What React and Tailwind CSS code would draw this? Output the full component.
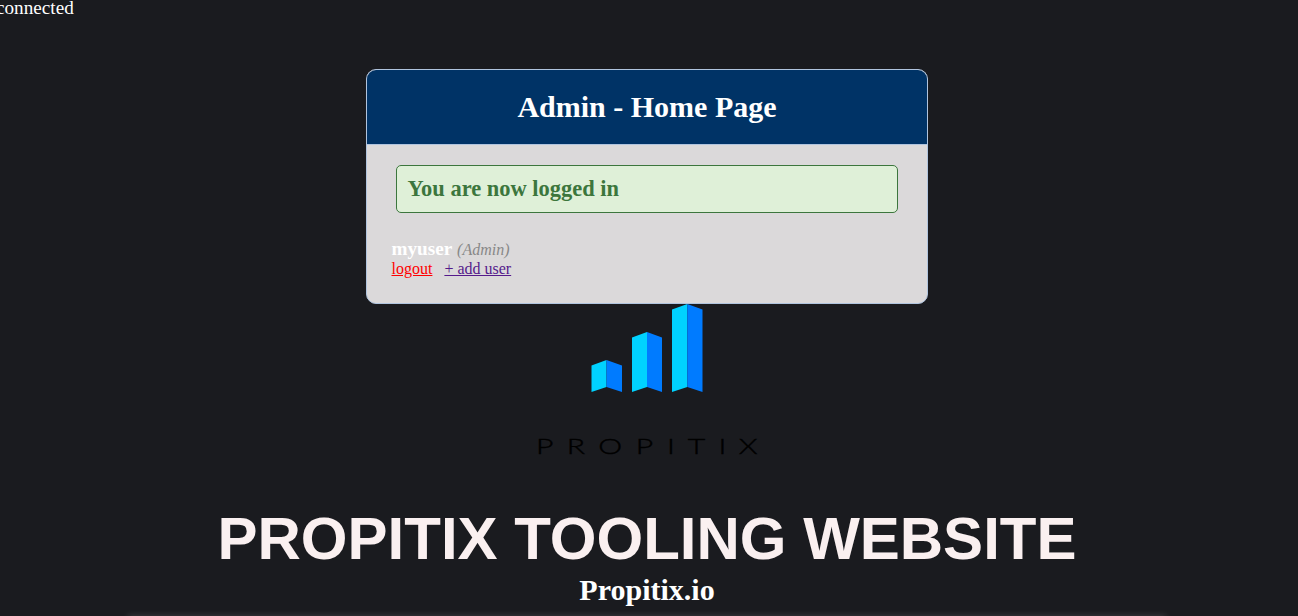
function Logo() {
  return (
    <svg width="240" height="160" viewBox="527 304 240 160" className="block" role="img" aria-label="Propitix">
      <g fill="#00d2ff">
        <path d="M591.5 365.5 606.5 360V387L591.5 392Z" />
        <path d="M632 337.5 647 332V387L632 392Z" />
        <path d="M672 309.5 687.3 304V387L672 392Z" />
      </g>
      <g fill="#007bff">
        <path d="M606.5 360 622 365.5V392L606.5 387Z" />
        <path d="M647 332 662 337.5V392L647 387Z" />
        <path d="M687.3 304 702.5 309.5V392L687.3 387Z" />
      </g>
      <text
        transform="translate(536 453.7) scale(1.36 1)"
        x="0 22.7 45.8 73.4 96.4 111.6 134.2 149.1"
        y="0"
        fill="#000"
        stroke="#000"
        strokeWidth="0.4"
        className="font-['Lato',sans-serif] text-[22.2px] font-light"
      >
        PROPITIX
      </text>
    </svg>
  );
}

export default function App() {
  return (
    <div className="flex h-[616px] flex-col overflow-hidden bg-[#1a1b1f] font-['Liberation_Serif',serif] text-[19.2px] leading-[22px] text-white">
      <p className="-ml-1 -mt-[3px] h-[22px]">connected</p>
      <main className="mt-[50px] flex w-[1294px] flex-col items-center">
        <section className="h-[235px] w-[562px] overflow-hidden rounded-[10px] border border-[#b0c4de] bg-[#dbd9da]">
          <header className="flex h-[75px] items-center justify-center border-b border-[#b0c4de] bg-[#003366]">
            <h2 className="text-[30px] font-bold leading-[34px]">Admin - Home Page</h2>
          </header>
          <div className="px-[29px] pt-5">
            <div className="flex h-12 items-center rounded-[5px] border border-[#3c763d] bg-[#dff0d8] px-[10.4px] text-[#3c763d]">
              <h3 className="text-[22.464px] font-bold leading-[26px]">You are now logged in</h3>
            </div>
          </div>
          <div className="mt-[25px] px-[24.5px]">
            <div className="h-[22px]">
              <strong>myuser</strong> <i className="text-base leading-none text-[#888888]">(Admin)</i>
            </div>
            <div className="flex gap-3 text-base leading-[18px]">
              <a className="text-[#ff0000] underline">logout</a>
              <a className="text-[#551a8b] underline">+ add user</a>
            </div>
          </div>
        </section>
        <Logo />
        <h1 className="mt-[41px] whitespace-nowrap font-['Liberation_Sans',sans-serif] text-[60px] font-bold leading-[68px] text-[#faf0f0]">
          PROPITIX TOOLING WEBSITE
        </h1>
        <h2 className="text-[30px] font-bold leading-[34px]">Propitix.io</h2>
        <div className="mt-[9px] h-10 w-[1038px] shadow-[0_0_7px_rgba(255,255,255,0.17)]" />
      </main>
    </div>
  );
}
